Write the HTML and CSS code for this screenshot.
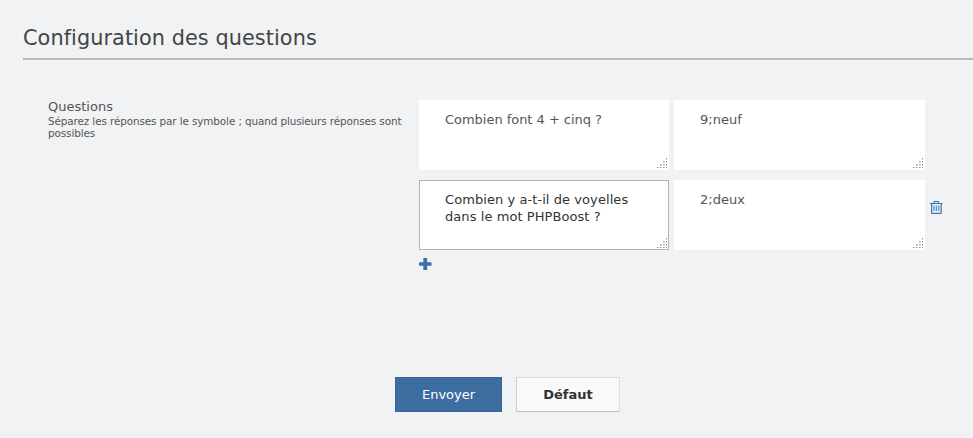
FILE: index.html
```html
<!DOCTYPE html>
<html lang="fr">
<head>
<meta charset="utf-8">
<title>Configuration des questions</title>
<link rel="stylesheet" href="styles.css">
</head>
<body>
<svg class="defs" width="0" height="0">
  <symbol id="grip" viewBox="0 0 10 10">
    <path fill="#929292" d="M9 0h1v1h-1zM9 3h1v1h-1zM9 6h1v1h-1zM9 9h1v1h-1zM6 9h1v1h-1zM3 9h1v1h-1zM0 9h1v1h-1z"/>
    <path fill="#b0b0b0" d="M6 3h1v1h-1zM6 6h1v1h-1zM3 6h1v1h-1z"/>
    <path fill="#cdcdcd" d="M9 1h1v1h-1zM9 4h1v1h-1zM9 7h1v1h-1zM7 3h1v1h-1zM7 6h1v1h-1zM4 6h1v1h-1zM1 9h1v1h-1zM4 9h1v1h-1zM7 9h1v1h-1zM6 4h2v1h-2zM6 7h2v1h-2zM3 7h2v1h-2z"/>
  </symbol>
</svg>
<form class="page">
  <h2 class="title">Configuration des questions</h2>
  <div class="element">
    <label class="label">Questions
      <span class="hint">Séparez les réponses par le symbole ; quand plusieurs réponses sont possibles</span>
    </label>
    <div class="fields">
      <div class="row">
        <div class="field question"><textarea>Combien font 4 + cinq ?</textarea><svg class="grip"><use href="#grip"/></svg></div>
        <div class="field answer"><textarea>9;neuf</textarea><svg class="grip"><use href="#grip"/></svg></div>
      </div>
      <div class="row">
        <div class="field question active"><textarea>Combien y a-t-il de voyelles dans le mot PHPBoost ?</textarea><svg class="grip"><use href="#grip"/></svg></div>
        <div class="field answer"><textarea>2;deux</textarea><svg class="grip"><use href="#grip"/></svg></div>
        <svg class="trash" viewBox="0 0 13 14" fill="none" stroke="#3d72b4">
          <path stroke-width="1.2" d="M0 3.500h12.500M4 3.200V2.200q0-.7.7-.7h3.200q.7 0 .7.700v1M1.600 3.500v9q0 .9.9.9h7.800q.9 0 .9-.9v-9"/>
          <path stroke="#4a95cb" stroke-width="1.3" d="M4 5.500v5.500M6.400 5.500v5.500M8.800 5.500v5.500"/>
        </svg>
      </div>
      <svg class="plus" viewBox="0 0 12 12"><path fill="#3d70ae" d="M4.800 0h2.900q.5 0 .5.500v3.800h3.700q.6 0 .6.600v2.300q0 .6-.6.600H8.200v3.700q0 .5-.5.500H4.800q-.5 0-.5-.5V7.800H.6Q0 7.800 0 7.200V4.900q0-.6.6-.6h3.700V.5q0-.5.5-.5z"/></svg>
    </div>
  </div>
  <div class="actions">
    <button class="button submit" type="button">Envoyer</button>
    <button class="button reset" type="button">Défaut</button>
  </div>
</form>
</body>
</html>
```
FILE: styles.css
```css
* { box-sizing: border-box; }
body {
  margin: 0;
  background: #f0f2f4;
  color: #555;
  font: 13px/17px "DejaVu Sans", sans-serif;
  overflow: hidden;
}
.defs { position: absolute; }
.page {
  display: flex;
  flex-direction: column;
  height: 438px;
  padding-left: 23px;
}
.title {
  margin: 0;
  height: 60px;
  padding-top: 25px;
  border-bottom: 2px solid #b8babb;
  color: #444;
  font-size: 20.8px;
  font-weight: 400;
  line-height: 26px;
  letter-spacing: 0.075px;
  font-variant-ligatures: common-ligatures;
}
.element {
  display: flex;
  padding: 40px 0 0 25px;
  height: 317px;
}
.label {
  width: 371px;
  margin-top: -1px;
  padding-right: 12px;
  line-height: 15px;
}
.hint {
  display: block;
  padding-top: 1px;
  font-size: 10.4px;
  line-height: 12px;
  letter-spacing: -0.1px;
}
.row {
  display: flex;
  gap: 5px;
  margin-bottom: 10px;
}
.field {
  position: relative;
  height: 70px;
  background: #fff;
}
.question { width: 250px; }
.answer { width: 251px; }
.field textarea {
  display: block;
  width: 100%;
  height: 100%;
  margin: 0;
  padding: 10px 25px;
  border: 1px solid transparent;
  background: transparent;
  color: #555;
  font: inherit;
  resize: none;
  overflow: hidden;
  outline: 0;
}
.question textarea { letter-spacing: -0.03px; }
.active textarea {
  border-color: #b4b4b4;
  color: #333;
  letter-spacing: 0.07px;
}
.grip {
  position: absolute;
  right: 2px;
  bottom: 2px;
  width: 10px;
  height: 10px;
}
.trash {
  width: 13px;
  height: 14px;
  margin-top: 20px;
}
.plus {
  display: block;
  width: 12px;
  height: 12px;
  margin-top: -2px;
  overflow: visible;
}
.actions {
  display: flex;
  gap: 14px;
  padding-left: 372px;
}
.button {
  height: 35px;
  padding: 0;
  border: 1px solid #386596;
  font: inherit;
}
.submit {
  width: 107px;
  background: #3d6ca0;
  color: #fff;
}
.reset {
  width: 104px;
  border-color: #ddd #ddd #bbb #ccc;
  background: #f9f9f9;
  color: #333;
  font-weight: 700;
}
```
